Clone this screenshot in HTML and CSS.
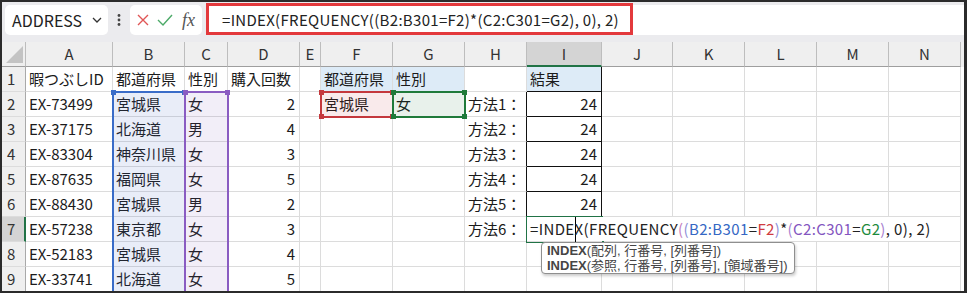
FILE: index.html
```html
<!DOCTYPE html>
<html lang="ja">
<head>
<meta charset="utf-8">
<title>Excel</title>
<link rel="stylesheet" href="styles.css">
</head>
<body>
<div class="app">
  <div class="topbar">
    <div class="namebox"><span>ADDRESS</span><svg width="10" height="6" viewBox="0 0 10 6"><path d="M1 1l4 4 4-4" fill="none" stroke="#333" stroke-width="1.3"/></svg></div>
    <div class="dots"><svg width="4" height="12" viewBox="0 0 4 12"><circle cx="2" cy="1.5" r="1.4" fill="#444"/><circle cx="2" cy="6" r="1.4" fill="#444"/><circle cx="2" cy="10.5" r="1.4" fill="#444"/></svg></div>
    <div class="fxbox">
      <svg class="ic-x" width="12" height="12" viewBox="0 0 12 12"><path d="M1 1l10 10M11 1L1 11" stroke="#e05656" stroke-width="1.4" fill="none"/></svg>
      <svg class="ic-ok" width="16" height="12" viewBox="0 0 16 12"><path d="M1 6l5 5L15 1" stroke="#4caa68" stroke-width="1.4" fill="none"/></svg>
      <span class="fx">fx</span>
    </div>
    <div class="fxinput"><div class="fxhl">=INDEX(FREQUENCY((B2:B301=F2)*(C2:C301=G2), 0), 2)</div></div>
  </div>

  <div class="sheet">
    <div class="grid cols">
      <div class="hd corner"><svg width="17" height="17" viewBox="0 0 17 17"><path d="M17 0V17H0Z" fill="#c3c3c3"/></svg></div>
      <div class="hd">A</div><div class="hd">B</div><div class="hd">C</div><div class="hd">D</div><div class="hd">E</div><div class="hd">F</div><div class="hd">G</div><div class="hd">H</div><div class="hd act-col">I</div><div class="hd">J</div><div class="hd">K</div><div class="hd">L</div><div class="hd">M</div><div class="hd">N</div><div class="hd fl"></div>

      <div class="rh">1</div><div>暇つぶしID</div><div>都道府県</div><div>性別</div><div>購入回数</div><div></div><div class="hl">都道府県</div><div class="hl">性別</div><div></div><div class="hl tb">結果</div><div></div><div></div><div></div><div></div><div></div><div class="fl"></div>

      <div class="rh">2</div><div>EX-73499</div><div>宮城県</div><div>女</div><div class="r">2</div><div></div><div>宮城県</div><div>女</div><div class="tl-edge">方法1：</div><div class="r tb">24</div><div></div><div></div><div></div><div></div><div></div><div class="fl"></div>

      <div class="rh">3</div><div>EX-37175</div><div>北海道</div><div>男</div><div class="r">4</div><div></div><div></div><div></div><div class="tl-edge">方法2：</div><div class="r tb">24</div><div></div><div></div><div></div><div></div><div></div><div class="fl"></div>

      <div class="rh">4</div><div>EX-83304</div><div>神奈川県</div><div>女</div><div class="r">3</div><div></div><div></div><div></div><div class="tl-edge">方法3：</div><div class="r tb">24</div><div></div><div></div><div></div><div></div><div></div><div class="fl"></div>

      <div class="rh">5</div><div>EX-87635</div><div>福岡県</div><div>女</div><div class="r">5</div><div></div><div></div><div></div><div class="tl-edge">方法4：</div><div class="r tb">24</div><div></div><div></div><div></div><div></div><div></div><div class="fl"></div>

      <div class="rh">6</div><div>EX-88430</div><div>宮城県</div><div>男</div><div class="r">2</div><div></div><div></div><div></div><div class="tl-edge">方法5：</div><div class="r tb">24</div><div></div><div></div><div></div><div></div><div></div><div class="fl"></div>

      <div class="rh act-row">7</div><div>EX-57238</div><div>東京都</div><div>女</div><div class="r">3</div><div></div><div></div><div></div><div>方法6：</div><div class="editcell"><span class="edit">=INDE<span class="cur"></span>X(FREQUENCY<span class="k1">(</span><span class="k2">(</span><span class="cb">B2:B301</span>=<span class="cr">F2</span><span class="k2">)</span>*<span class="k3">(</span><span class="cp">C2:C301</span>=<span class="cg">G2</span><span class="k3">)</span>, 0), 2)</span></div><div></div><div></div><div></div><div></div><div></div><div class="fl"></div>

      <div class="rh">8</div><div>EX-52183</div><div>宮城県</div><div>女</div><div class="r">4</div><div></div><div></div><div></div><div></div><div></div><div></div><div></div><div></div><div></div><div></div><div class="fl"></div>

      <div class="rh">9</div><div>EX-33741</div><div>北海道</div><div>女</div><div class="r">5</div><div></div><div></div><div></div><div></div><div></div><div></div><div></div><div></div><div></div><div></div><div class="fl"></div>
    </div>

    <div class="overlay cols">
      <div class="rng rng-b"><span class="h tl"></span><span class="h tr"></span></div>
      <div class="rng rng-c"><span class="h tl"></span><span class="h tr"></span></div>
      <div class="rng rng-f"><span class="h tl"></span><span class="h tr"></span><span class="h bl"></span><span class="h br"></span></div>
      <div class="rng rng-g"><span class="h tl"></span><span class="h tr"></span><span class="h bl"></span><span class="h br"></span></div>
      <div class="rng act"><span class="h br"></span>
        <div class="tip">
          <div class="tipline"><span class="fn">INDEX</span>(配列, 行番号, [列番号])</div>
          <div class="tipline"><span class="fn">INDEX</span>(参照, 行番号, [列番号], [領域番号])</div>
        </div>
      </div>
    </div>
  </div>
</div>
</body>
</html>
```
FILE: styles.css
```css
html, body {
  margin: 0;
  padding: 0;
}
body {
  background: #2b2b2b;
  width: 967px;
  height: 293px;
  overflow: hidden;
  font-family: "Noto Sans CJK JP", "Noto Sans", sans-serif;
}
.app {
  margin: 2px 3px 2px 2px;
  width: 962px;
  height: 289px;
  overflow: hidden;
  background: #ebebee;
}

/* formula bar */
.topbar {
  height: 40px;
  box-sizing: border-box;
  padding: 3px 0 0 3px;
  display: flex;
  align-items: flex-start;
}
.namebox {
  width: 103px;
  height: 30px;
  box-sizing: border-box;
  background: #fff;
  border-radius: 5px;
  display: flex;
  align-items: center;
  justify-content: space-between;
  padding: 0 6px 0 7px;
  font-size: 16px;
  color: #222;
  line-height: 30px;
}
.dots {
  width: 22px;
  height: 30px;
  display: flex;
  align-items: center;
  justify-content: center;
}
.fxbox {
  width: 72px;
  height: 30px;
  box-sizing: border-box;
  background: #fff;
  border-radius: 5px;
  display: flex;
  align-items: center;
}
.ic-x { margin-left: 7px; }
.ic-ok { margin-left: 8px; }
.fx {
  margin-left: 9px;
  font-family: "Liberation Serif", "DejaVu Serif", serif;
  font-style: italic;
  font-size: 18px;
  color: #555;
  line-height: 30px;
}
.fxinput {
  margin-left: 4px;
  flex: 1;
  height: 30px;
  background: #fff;
  display: flex;
}
.fxhl {
  margin-top: -2px;
  height: 32px;
  width: 427px;
  box-sizing: border-box;
  border: 3px solid #e3393c;
  padding-left: 13px;
  display: flex;
  align-items: center;
  font-size: 15px;
  letter-spacing: 0.3px;
  color: #222;
  white-space: nowrap;
}

/* sheet */
.sheet {
  position: relative;
}
.cols {
  display: grid;
  grid-template-columns: 24px 87px 72px 43px 72px 21px 72px 72px 62px 75px 71px 72px 72px 72px 72px 1fr;
  grid-template-rows: repeat(10, 25px);
  grid-auto-rows: 25px;
}
.grid {
  font-size: 15px;
}
.grid > div {
  box-sizing: border-box;
  border-right: 1px solid #dcdcdc;
  border-bottom: 1px solid #dcdcdc;
  background: #fff;
  padding: 0 3px;
  line-height: 24px;
  white-space: nowrap;
  overflow: hidden;
  color: #1b1b1b;
}
.grid > .r { text-align: right; padding-right: 4px; }
.grid > .hd {
  background: #efefef;
  text-align: center;
  color: #333;
  border-right: 1px solid #bdbdbd;
  border-bottom: 1px solid #9e9e9e;
}
.grid > .corner {
  padding: 0;
}
.grid > .corner svg {
  display: block;
  margin: 4px 0 0 4px;
}
.grid > .act-col {
  background: #d4d4d4;
  border-bottom: 2px solid #217346;
}
.grid > .rh {
  background: #efefef;
  color: #333;
  padding-left: 5px;
  border-right: 1px solid #a9a9a9;
}
.grid > .act-row {
  background: #d4d4d4;
  border-right: 2px solid #217346;
}
.grid > .hl { background: #ddebf7; }
.grid > .tb {
  border-right: 1px solid #111;
  border-bottom: 1px solid #111;
}
.grid > .tl-edge { border-right: 1px solid #111; }
.grid > .fl {
  border: none;
  padding: 0;
}
.grid > .hd.fl { background: #efefef; }
.grid > .editcell {
  overflow: visible;
  z-index: 1;
}
.edit {
  display: inline-block;
  height: 24px;
  background: #fff;
  padding-right: 5px;
  letter-spacing: 0.37px;
  color: #222;
}
.cur {
  display: inline-block;
  width: 1px;
  height: 25px;
  margin-right: -1px;
  background: #000;
  vertical-align: top;
}
.k1 { color: #c47cc0; }
.k2 { color: #8e8ed8; }
.k3 { color: #a77fd0; }
.cb { color: #3567c4; }
.cr { color: #cf3a3f; }
.cp { color: #8355c0; }
.cg { color: #1d8a3c; }

/* overlays */
.overlay {
  position: absolute;
  left: 0;
  top: 0;
  right: 0;
  pointer-events: none;
}
.rng {
  position: relative;
  box-sizing: border-box;
  margin: -1px;
  border: 2px solid currentColor;
}
.h {
  position: absolute;
  width: 5px;
  height: 5px;
  background: currentColor;
}
.h.tl { left: -3px; top: -3px; }
.h.tr { right: -3px; top: -3px; }
.h.bl { left: -3px; bottom: -3px; }
.h.br { right: -3px; bottom: -3px; }
.rng-b {
  grid-column: 3;
  grid-row: 3 / 13;
  color: #3a6cc8;
  background: rgba(70, 110, 200, 0.12);
  border-bottom: none;
}
.rng-c {
  grid-column: 4;
  grid-row: 3 / 13;
  color: #8a5cc2;
  background: rgba(130, 90, 190, 0.1);
  border-bottom: none;
}
.rng-f {
  grid-column: 7;
  grid-row: 3;
  color: #c4383d;
  background: rgba(200, 50, 60, 0.1);
}
.rng-g {
  grid-column: 8;
  grid-row: 3;
  color: #1f7a3a;
  background: rgba(30, 120, 60, 0.1);
}
.act {
  grid-column: 10;
  grid-row: 8;
  color: #217346;
}
.tip {
  position: absolute;
  left: 13px;
  top: calc(100% + 1px);
  background: #fff;
  border: 1px solid #8f8f8f;
  border-radius: 4px;
  box-shadow: 1px 2px 3px rgba(0, 0, 0, 0.2);
  padding: 0 6px 0 5px;
  font-family: "Liberation Sans", "Noto Sans CJK JP", sans-serif;
  font-size: 13px;
  color: #454545;
  white-space: nowrap;
}
.tipline {
  height: 15px;
  line-height: 15px;
}
.fn { font-weight: 700; }
```
